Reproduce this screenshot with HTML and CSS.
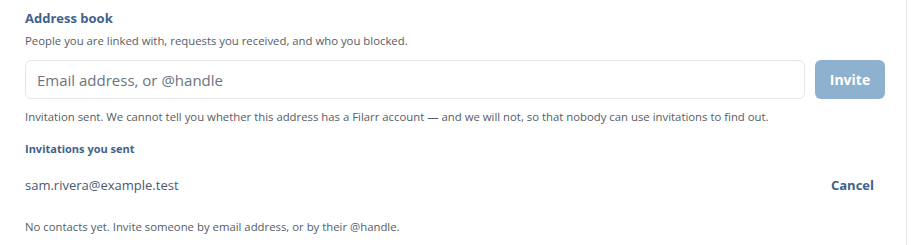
FILE: index.html
```html
<!DOCTYPE html>
<html lang="en">
<head>
  <meta charset="UTF-8">
  <meta name="viewport" content="width=device-width, initial-scale=1.0">
  <title>Address book</title>
  <link rel="stylesheet" href="styles.css">
</head>
<body>
  <div class="panel">
    <h2 class="title">Address book</h2>
    <p class="hint">People you are linked with, requests you received, and who you blocked.</p>
    <form class="invite-form">
      <input class="invite-input" type="text" placeholder="Email address, or @handle">
      <button class="invite-btn" type="button" disabled>Invite</button>
    </form>
    <p class="hint notice">Invitation sent. We cannot tell you whether this address has a Filarr account — and we will not, so that nobody can use invitations to find out.</p>
    <h3 class="subtitle">Invitations you sent</h3>
    <div class="invite-row">
      <span class="invite-email">sam.rivera@example.test</span>
      <a class="cancel" href="#">Cancel</a>
    </div>
    <p class="hint empty">No contacts yet. Invite someone by email address, or by their @handle.</p>
  </div>
</body>
</html>
```

FILE: styles.css
```css
body {
  margin: 0;
  background: #fff;
  font-family: 'Open Sans', 'Noto Sans', sans-serif;
  color: #4a5563;
}
.panel {
  width: 860px;
  padding: 8px 21px 0 25px;
  border-right: 1px solid #e6eaf0;
  height: 245px;
  box-sizing: content-box;
}
.title {
  margin: 0;
  font-size: 13px;
  font-weight: 700;
  color: #41628a;
  line-height: 20px;
}
.hint {
  margin: 0;
  font-size: 11.35px;
  color: #555d66;
  line-height: 16px;
}
.title + .hint {
  margin-top: 5px;
}
.invite-form {
  display: flex;
  gap: 10px;
  margin: 11px 0 0;
}
.invite-input {
  flex: 1;
  height: 39px;
  box-sizing: border-box;
  border: 1px solid #e3e7ec;
  border-radius: 6px;
  padding: 0 11px;
  font-family: inherit;
  font-size: 15px;
  color: #333;
  outline: none;
}
.invite-input::placeholder {
  color: #6b7480;
}
.invite-btn {
  width: 70px;
  height: 39px;
  border: 0;
  border-radius: 6px;
  background: #8eb1d0;
  color: #fff;
  font-family: inherit;
  font-size: 14px;
  font-weight: 700;
}
.notice {
  margin-top: 10px;
}
.subtitle {
  margin: 16px 0 0;
  font-size: 11px;
  font-weight: 700;
  color: #41628a;
  line-height: 16px;
}
.invite-row {
  display: flex;
  justify-content: space-between;
  align-items: center;
  margin-top: 19px;
  padding-right: 11px;
  font-size: 13px;
  line-height: 18px;
}
.invite-email {
  color: #4a5a6e;
}
.cancel {
  color: #41628a;
  font-weight: 700;
  text-decoration: none;
}
.empty {
  margin-top: 25px;
}
```
